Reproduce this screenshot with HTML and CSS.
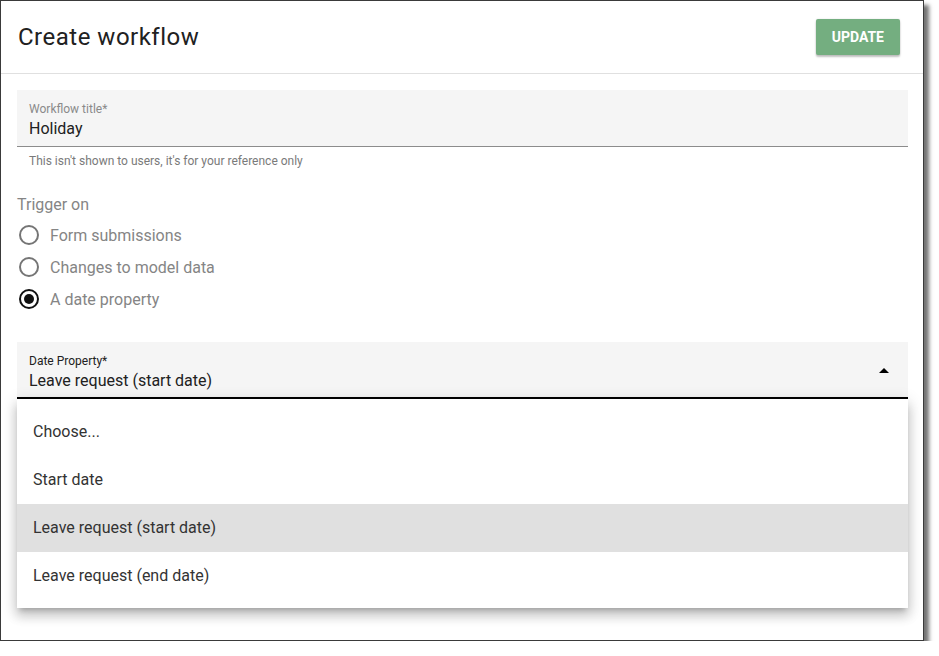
FILE: index.html
```html
<!doctype html>
<html>
	<head>
	<meta charset="utf-8">
	<title>Create workflow</title>
	<link rel="stylesheet" href="styles.css">
	</head>

	<body>
      <div class="frame">
        <div class="head">
          <h1 class="title">Create workflow</h1>
          <button class="update">UPDATE</button>
        </div>
        <div class="content">
          <div class="field">
            <div class="field-label">Workflow title*</div>
            <div class="field-value">Holiday</div>
          </div>
          <div class="helper">This isn't shown to users, it's for your reference only</div>

          <div class="group-label">Trigger on</div>
          <div class="radios">
            <div class="radio"><span class="circle"></span>Form submissions</div>
            <div class="radio"><span class="circle"></span>Changes to model data</div>
            <div class="radio"><span class="circle checked"></span>A date property</div>
          </div>

          <div class="select-wrap">
            <div class="select">
              <div class="select-text">
                <div class="select-label">Date Property*</div>
                <div class="field-value">Leave request (start date)</div>
              </div>
              <span class="arrow"></span>
            </div>
            <ul class="menu">
              <li>Choose...</li>
              <li>Start date</li>
              <li class="active">Leave request (start date)</li>
              <li>Leave request (end date)</li>
            </ul>
          </div>
        </div>
      </div>
</body>
</html>
```

FILE: styles.css
```css
body {
	margin: 0;
	background: #fff;
	font-family: Roboto, "Liberation Sans", sans-serif;
}
.frame {
	width: 922px;
	height: 639px;
	border: 1px solid #3a3a3a;
	box-shadow: 5px 5px 4px rgba(0, 0, 0, 0.55);
	overflow: hidden;
	background: #fff;
}
.head {
	height: 72px;
	border-bottom: 1px solid #e0e0e0;
	display: flex;
	align-items: center;
	justify-content: space-between;
	padding: 0 23px 0 17px;
}
.title {
	margin: 0;
	font-size: 24px;
	line-height: 28px;
	font-weight: 400;
	letter-spacing: 0.5px;
	color: #212121;
}
.update {
	height: 36px;
	padding: 0 16px;
	border: none;
	border-radius: 2px;
	background: #74ae80;
	color: #fff;
	font-family: Roboto, "Liberation Sans", sans-serif;
	font-size: 14px;
	font-weight: 700;
	box-shadow: 0 2px 2px rgba(0, 0, 0, 0.24), 0 0 2px rgba(0, 0, 0, 0.12);
}
.content {
	padding: 16px 15px 0 16px;
}
.field {
	height: 46px;
	background: #f5f5f5;
	border-bottom: 1px solid #8c8c8c;
	padding: 10px 12px 0 12px;
}
.field .field-label {
	padding-top: 1px;
}
.field-label {
	font-size: 12px;
	line-height: 16px;
	color: #8a8a8a;
}
.field-value {
	font-size: 16px;
	line-height: 20px;
	margin-top: 2px;
	color: #212121;
}
.helper {
	font-size: 12px;
	line-height: 16px;
	color: #7a7a7a;
	padding-left: 12px;
	margin-top: 6px;
}
.group-label {
	margin-top: 26px;
	font-size: 16px;
	line-height: 20px;
	color: #858585;
}
.radios {
	margin-top: 4px;
}
.radio {
	display: flex;
	align-items: center;
	height: 32px;
	font-size: 16px;
	color: #858585;
}
.circle {
	width: 16px;
	height: 16px;
	border: 2px solid #757575;
	border-radius: 50%;
	margin: 0 11px 0 2px;
	box-sizing: content-box;
	position: relative;
}
.circle.checked {
	border-color: #111;
}
.circle.checked::after {
	content: "";
	position: absolute;
	left: 3px;
	top: 3px;
	width: 10px;
	height: 10px;
	border-radius: 50%;
	background: #111;
}
.select-wrap {
	position: relative;
	margin-top: 27px;
}
.select {
	height: 55px;
	background: #f5f5f5;
	border-bottom: 2px solid #000;
	display: flex;
	align-items: center;
	padding: 0 19px 0 12px;
	box-sizing: content-box;
}
.select-text {
	flex: 1;
	align-self: flex-start;
	padding-top: 11px;
}
.select-label {
	font-size: 12px;
	line-height: 16px;
	color: #212121;
}
.arrow {
	width: 0;
	height: 0;
	border-left: 5px solid transparent;
	border-right: 5px solid transparent;
	border-bottom: 5px solid #000;
	margin-top: 2px;
}
.menu {
	position: absolute;
	left: 0;
	right: 0;
	top: 57px;
	margin: 0;
	padding: 9px 0 8px;
	list-style: none;
	background: #fff;
	box-shadow: 0 5px 5px -3px rgba(0, 0, 0, 0.2), 0 8px 10px 1px rgba(0, 0, 0, 0.14), 0 3px 14px 2px rgba(0, 0, 0, 0.12);
}
.menu li {
	height: 48px;
	line-height: 48px;
	padding-left: 16px;
	font-size: 16px;
	color: #333;
}
.menu li.active {
	background: #e0e0e0;
}
```
